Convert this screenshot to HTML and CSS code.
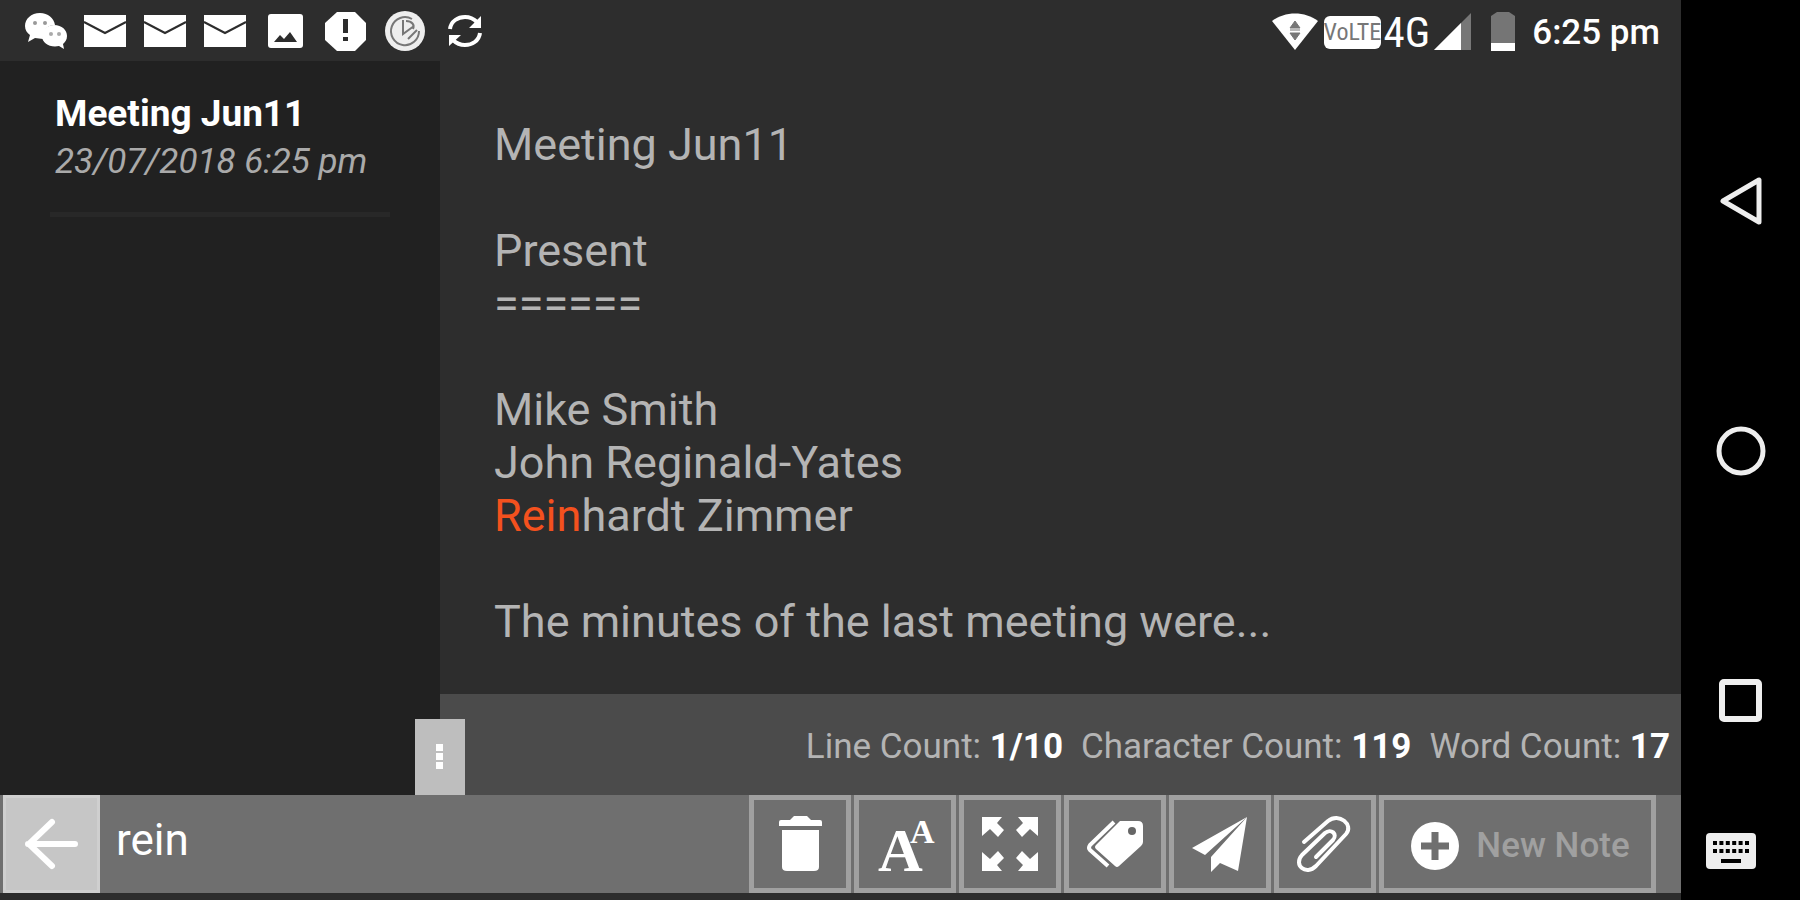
FILE: index.html
```html
<!DOCTYPE html>
<html lang="en">
<head>
    <meta charset="UTF-8">
    <meta name="viewport" content="width=device-width, initial-scale=1.0">
    <title>Notes</title>
    <link rel="stylesheet" href="styles.css">
</head>
<body>

<div class="app">
    <!-- Status bar -->
    <header class="status-bar">
        <div class="status-left">
            <svg viewBox="0 0 60 60">
                <path d="M25 12c-9 0-15 6-15 13 0 4 2 7 5 9l-2 7 7-4 8 1c-1-8 4-14 12-14-1-7-7-12-15-12z" fill="#fff"/>
                <path d="M39 24c8 0 13 5 13 11 0 4-2 6-4 8l1 5-5-3c-9 2-17-3-17-10 0-6 5-11 12-11z" fill="#fff"/>
                <circle cx="20" cy="22" r="2" fill="#999"/><circle cx="30" cy="22" r="2" fill="#999"/>
                <circle cx="36" cy="33" r="2" fill="#aaa"/><circle cx="44" cy="33" r="2" fill="#aaa"/>
            </svg>
            <svg viewBox="0 0 60 60"><path d="M9 14h42v32H9z" fill="#fff"/><path d="M9 21l21 11 21-11" fill="none" stroke="#2d2d2d" stroke-width="2"/></svg>
            <svg viewBox="0 0 60 60"><path d="M9 14h42v32H9z" fill="#fff"/><path d="M9 21l21 11 21-11" fill="none" stroke="#2d2d2d" stroke-width="2"/></svg>
            <svg viewBox="0 0 60 60"><path d="M9 14h42v32H9z" fill="#fff"/><path d="M9 21l21 11 21-11" fill="none" stroke="#2d2d2d" stroke-width="2"/></svg>
            <svg viewBox="0 0 60 60"><rect x="13" y="13" width="35" height="34" rx="3" fill="#fff"/><path d="M19 41l6-7 4 4 6-7 7 10z" fill="#2d2d2d"/></svg>
            <svg viewBox="0 0 60 60"><path d="M22 11h18l11 11v17L40 50H22L10 39V22z" fill="#fff"/><path d="M28 18h5v14h-5zM28 36h5v4h-5z" fill="#2d2d2d"/></svg>
            <svg viewBox="0 0 60 60">
                <circle cx="30" cy="30" r="20" fill="#eee"/>
                <path d="M37 18a14 14 0 1 0 7 12" fill="none" stroke="#777" stroke-width="2"/>
                <path d="M28 19v14l11-8M31 20c6 0 9 4 7 8" fill="none" stroke="#777" stroke-width="2"/>
                <path d="M33 38l9-9" stroke="#777" stroke-width="2"/>
            </svg>
            <svg viewBox="0 0 60 60">
                <path d="M15 28c1-8 8-12 15-12 5 0 9 2 12 5M45 32c-1 8-8 12-15 12-5 0-9-2-12-5" fill="none" stroke="#fff" stroke-width="4"/>
                <path d="M46 15v12H34zM14 45V34h12z" fill="#fff"/>
            </svg>
        </div>
        <div class="status-right">
            <svg class="wifi" viewBox="0 0 48 40">
                <path d="M1 9C14-1 34-1 47 9L24 38z" fill="#fff"/>
                <path d="M24 9l5 7H19zM24 28l-5-7h10zM19 18h10" fill="#777" stroke="#777"/>
            </svg>
            <span class="volte">VoLTE</span>
            <span class="network">4G</span>
            <svg class="signal" viewBox="0 0 38 38"><path d="M37 0v37H0z" fill="#777"/><path d="M27 10v27H0z" fill="#fff"/></svg>
            <svg class="battery" viewBox="0 0 26 40"><path d="M1 4l6-4h12l6 4v27H1z" fill="#757575"/><path d="M1 31h24v8H1z" fill="#fff"/></svg>
            <span class="time">6:25 pm</span>
        </div>
    </header>

    <main class="content">
        <aside class="note-list">
            <a class="note-item" href="#">
                <span class="note-title">Meeting Jun11</span>
                <span class="note-date">23/07/2018 6:25 pm</span>
            </a>
        </aside>
        <section class="note">
            <div class="editor" contenteditable="true" spellcheck="false" role="textbox" aria-multiline="true" aria-label="Note">
                <div>Meeting Jun11</div>
                <div><br></div>
                <div>Present</div>
                <div>======</div>
                <div><br></div>
                <div>Mike Smith</div>
                <div>John Reginald-Yates</div>
                <div><mark>Rein</mark>hardt Zimmer</div>
                <div><br></div>
                <div>The minutes of the last meeting were...</div>
            </div>
            <div class="counts">
                <span>Line Count: <b>1/10</b></span>
                <span>Character Count: <b>119</b></span>
                <span>Word Count: <b>17</b></span>
                <button type="button" class="handle" aria-label="More">
                    <svg viewBox="0 0 8 28"><path d="M0 1h7v7H0zM0 10h7v7H0zM0 19h7v7H0z" fill="#fff"/></svg>
                </button>
            </div>
        </section>
    </main>

    <!-- Bottom toolbar -->
    <footer class="toolbar">
        <button type="button" class="back" aria-label="Back">
            <svg viewBox="0 0 56 56"><path d="M51 28H4M28 6L5 28l23 22" fill="none" stroke="#fff" stroke-width="6" stroke-linecap="round" stroke-linejoin="round"/></svg>
        </button>
        <input type="text" class="search" value="rein" aria-label="Search notes">
        <div class="tools">
            <button type="button" class="tool" aria-label="Delete">
                <svg viewBox="0 0 60 60"><path d="M9 8q0-2 2-2h9l4-4h13l4 4h9q2 0 2 2v4H9z" fill="#fff"/><path d="M12 16h37v37q0 4-5 4H17q-5 0-5-4z" fill="#fff"/></svg>
            </button>
            <button type="button" class="tool" aria-label="Font size">
                <svg viewBox="0 0 60 60">
                    <g class="letter">
                        <text x="3" y="57" font-size="62">A</text>
                        <text x="35" y="29" font-size="34">A</text>
                    </g>
                </svg>
            </button>
            <button type="button" class="tool" aria-label="Full screen">
                <svg viewBox="0 0 60 60">
                    <path d="M2 3h20l-5 6 7 7-6 7-8-8-8 7zM58 3H38l5 6-7 7 6 7 8-8 8 7zM2 57h20l-5-6 7-7-6-7-8 8-8-7zM58 57H38l5-6-7-7 6-7 8 8 8-7z" fill="#fff"/>
                </svg>
            </button>
            <button type="button" class="tool" aria-label="Tags">
                <svg viewBox="0 0 60 60">
                    <path d="M35 7h18q5 0 5 5v16q0 2-2 4L34 52q-2 2-4 0L11 35q-2-2 0-4z" fill="#fff"/>
                    <path d="M29 8L5 31q-2 3 0 5l18 16" fill="none" stroke="#fff" stroke-width="4"/>
                    <circle cx="47" cy="17" r="4" fill="#666"/>
                </svg>
            </button>
            <button type="button" class="tool" aria-label="Send">
                <svg viewBox="0 0 60 60"><path d="M57 3L2 34l13 7zM57 3L21 43v15l9-9 18 8z" fill="#fff"/></svg>
            </button>
            <button type="button" class="tool" aria-label="Attach">
                <svg viewBox="0 0 60 60">
                    <path d="M9 28L33 7c11-9 26 4 18 13L21 52C11 62-2 51 7 41l23-22c6-5 13 1 8 7L21 43" fill="none" stroke="#fff" stroke-width="4" stroke-linecap="round" stroke-linejoin="round"/>
                </svg>
            </button>
            <button type="button" class="tool new-note">
                <svg viewBox="0 0 50 50"><circle cx="25" cy="25" r="24" fill="#fff"/><path d="M25 11v28M11 25h28" stroke="#6f6f6f" stroke-width="7"/></svg>
                New Note
            </button>
        </div>
    </footer>
</div>

<nav class="nav-bar">
    <button type="button" aria-label="Back"><svg viewBox="0 0 50 50"><path d="M43 4v42L7 25z" fill="none" stroke="#eee" stroke-width="5" stroke-linejoin="round"/></svg></button>
    <button type="button" aria-label="Home"><svg viewBox="0 0 50 50"><circle cx="25" cy="25" r="22" fill="none" stroke="#eee" stroke-width="5"/></svg></button>
    <button type="button" aria-label="Recent apps"><svg viewBox="0 0 50 50"><rect x="6" y="6" width="37" height="37" rx="2" fill="none" stroke="#eee" stroke-width="6"/></svg></button>
    <button type="button" class="keyboard" aria-label="Keyboard">
        <svg viewBox="0 0 50 50">
            <rect x="0" y="7" width="50" height="36" rx="4" fill="#eee"/>
            <path d="M7 17h36M7 25h36" stroke="#000" stroke-width="4" stroke-dasharray="4 2.400"/>
            <path d="M15 35h20" stroke="#000" stroke-width="4"/>
        </svg>
    </button>
</nav>

</body>
</html>
```
FILE: styles.css
```css
* {
    box-sizing: border-box;
}
body {
    margin: 0;
    display: flex;
    min-height: 100vh;
    background: #2d2d2d;
    font-family: Roboto, "Liberation Sans", sans-serif;
    color: #fff;
}
button {
    padding: 0;
    border: 0;
    background: none;
    font-family: inherit;
}
svg {
    display: block;
    overflow: visible;
}
.app {
    flex: 1;
    min-width: 0;
    display: flex;
    flex-direction: column;
    padding-bottom: 7px;
}

/* Status bar */
.status-bar {
    display: flex;
    justify-content: space-between;
    align-items: center;
    height: 61px;
    padding: 0 21px 0 15px;
}
.status-left,
.status-right {
    display: flex;
    align-items: center;
}
.status-left svg {
    width: 60px;
    height: 60px;
}
.status-right {
    padding-top: 3px;
}
.wifi {
    width: 48px;
    height: 40px;
    margin-right: 5px;
}
.volte {
    width: 57px;
    height: 33px;
    border-radius: 6px;
    background: #fff;
    color: #777;
    font-family: "Roboto Condensed", "Liberation Sans Narrow", Roboto, sans-serif;
    font-size: 24px;
    line-height: 33px;
    text-align: center;
}
.network {
    margin: 0 4px 0 3px;
    font-family: "Roboto Condensed", "Liberation Sans Narrow", Roboto, sans-serif;
    font-size: 43px;
}
.signal {
    width: 38px;
    height: 38px;
}
.battery {
    width: 26px;
    height: 40px;
    margin: 0 16px 0 18px;
}
.time {
    font-size: 35px;
    font-weight: 500;
}

/* Notes */
.content {
    flex: 1;
    display: flex;
}
.note-list {
    width: 440px;
    padding: 32px 50px;
    background: #212121;
}
.note-item {
    display: block;
    padding: 0 5px 24px;
    border-bottom: 5px solid #282828;
    color: #fff;
    text-decoration: none;
}
.note-title,
.note-date {
    display: block;
    white-space: nowrap;
}
.note-title {
    font-size: 37px;
    font-weight: bold;
    line-height: 42px;
}
.note-date {
    font-size: 35px;
    font-style: italic;
    line-height: 53px;
    color: #aaa;
}
.note {
    flex: 1;
    display: flex;
    flex-direction: column;
}
.editor {
    flex: 1;
    padding: 57px 54px 0;
    font-size: 45px;
    line-height: 53px;
    color: #b4b4b4;
    outline: none;
}
.editor mark {
    background: none;
    color: #f4511e;
}
.counts {
    position: relative;
    display: flex;
    justify-content: flex-end;
    align-items: center;
    gap: 18px;
    height: 101px;
    padding: 3px 11px 0 64px;
    background: #4b4b4b;
    color: #b4b4b4;
    font-size: 35px;
}
.counts b {
    color: #fff;
}
.handle {
    position: absolute;
    left: -25px;
    bottom: 0;
    display: flex;
    justify-content: center;
    align-items: center;
    width: 50px;
    height: 76px;
    background: #bebebe;
}
.handle svg {
    width: 8px;
    height: 28px;
}

/* Toolbar */
.toolbar {
    display: flex;
    height: 98px;
    padding: 0 25px 0 3px;
    background: #6f6f6f;
}
.back {
    display: flex;
    justify-content: center;
    align-items: center;
    width: 97px;
    border: 3px solid #cfcfcf;
    background: #c6c6c6;
}
.back svg {
    width: 56px;
    height: 56px;
}
.search {
    flex: 1;
    min-width: 0;
    padding: 0 16px 8px;
    border: 0;
    outline: none;
    background: none;
    color: #fff;
    font-family: inherit;
    font-size: 44px;
}
.tools {
    display: flex;
    gap: 3px;
}
.tool {
    display: flex;
    justify-content: center;
    align-items: center;
    width: 102px;
    border: 5px solid #a0a0a0;
}
.tool svg {
    width: 60px;
    height: 60px;
}
.letter {
    fill: #fff;
    font-family: "Liberation Serif", serif;
    font-weight: bold;
}
.new-note {
    gap: 16px;
    width: 277px;
    padding: 3px 0 0 5px;
    color: #a0a0a0;
    font-size: 35px;
    font-weight: 500;
}
.new-note svg {
    width: 50px;
    height: 50px;
}

/* Android navigation */
.nav-bar {
    display: grid;
    grid-template-rows: 5fr 5fr 5fr 1fr;
    place-items: center;
    width: 119px;
    padding: 76px 0 24px;
    background: #000;
}
.nav-bar svg {
    width: 50px;
    height: 50px;
}
.nav-bar .keyboard {
    margin-right: 20px;
}
```
